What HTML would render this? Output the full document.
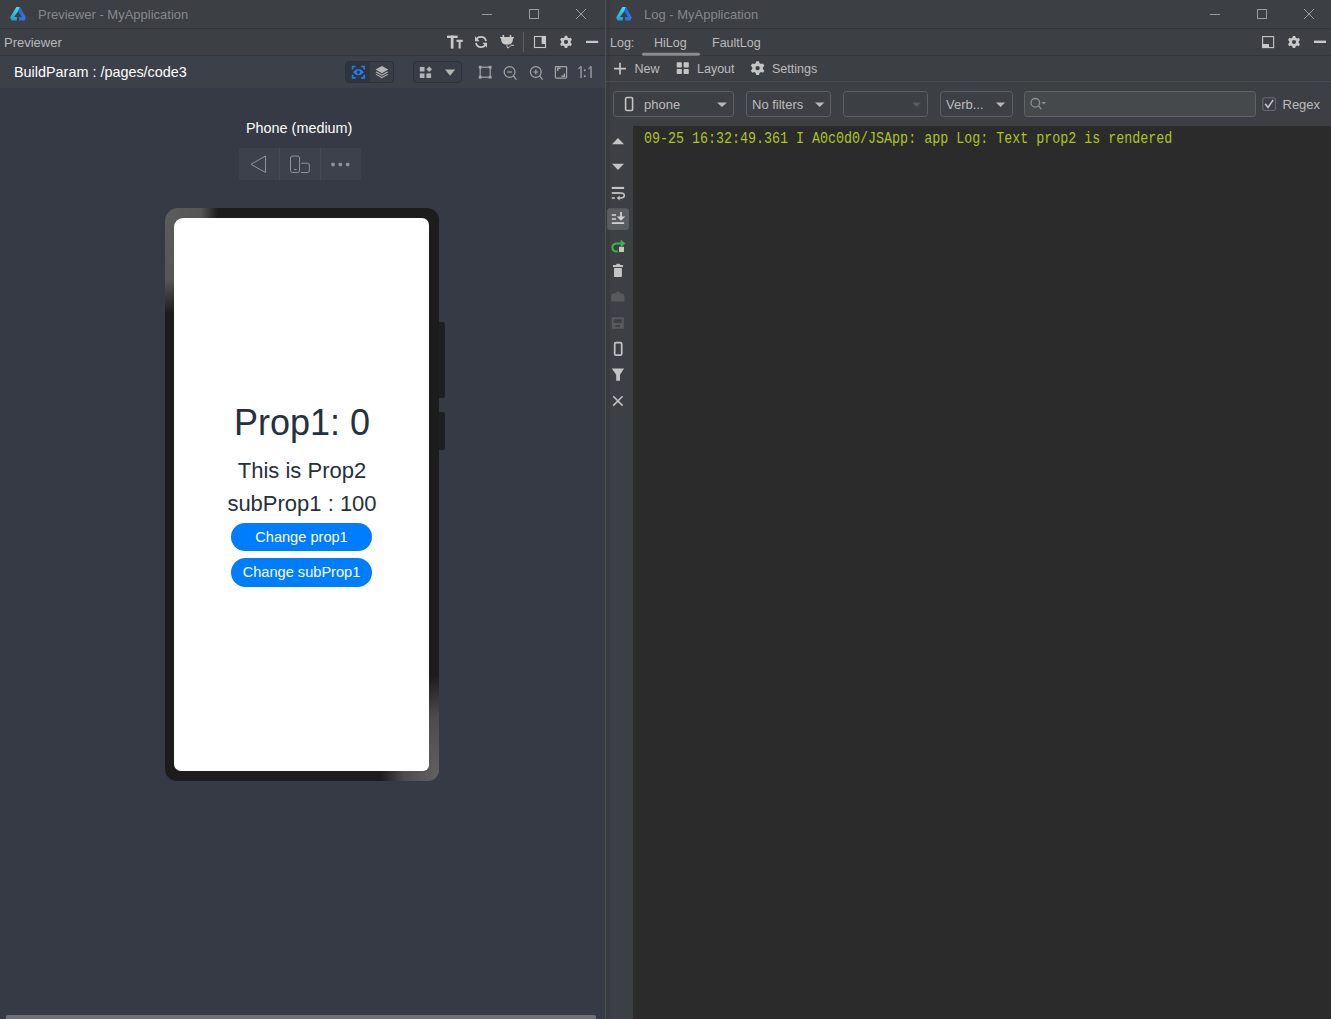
<!DOCTYPE html>
<html><head><meta charset="utf-8">
<style>
*{margin:0;padding:0;box-sizing:border-box}
html,body{width:1331px;height:1019px;overflow:hidden;background:#3c3f44;font-family:"Liberation Sans",sans-serif}
.a{position:absolute}
svg{position:absolute;overflow:visible}
.tt{font-size:13px;color:#86888b;top:7px;white-space:nowrap}
.nw{white-space:nowrap}
</style></head><body>
<!-- LEFT WINDOW -->
<div class="a" style="left:0;top:0;width:605px;height:1019px;background:#353a44">
  <div class="a" style="left:0;top:0;width:605px;height:28px;background:#3c3f44"></div>
  <div class="a" style="left:0;top:28px;width:605px;height:1px;background:#323539"></div>
  <!-- logo -->
  <svg style="left:10px;top:6.9px" width="16" height="14" viewBox="0 0 16 14">
    <defs><linearGradient id="lgc" x1="0" y1="0" x2="0" y2="1"><stop offset="0" stop-color="#46dde9"/><stop offset="1" stop-color="#1d9cd6"/></linearGradient>
    <linearGradient id="lgb" x1="0" y1="0" x2="1" y2="1"><stop offset="0" stop-color="#2467d4"/><stop offset="1" stop-color="#3d74e2"/></linearGradient></defs>
    <path d="M6.3 0 H10 L8.2 4.3 L4 10.1 H6.9 V13.4 H1.5 L0.1 10.5 Z" fill="url(#lgc)"/>
    <path d="M10 0 L15.8 10.5 L14.5 13.4 H9 V10.1 H12 L8.2 4.3 Z" fill="url(#lgb)"/>
  </svg>
  <div class="a tt" style="left:38px">Previewer - MyApplication</div>
  <!-- window buttons -->
  <div class="a" style="left:482px;top:14px;width:10px;height:1px;background:#9a9c9e"></div>
  <div class="a" style="left:529px;top:9px;width:10px;height:10px;border:1px solid #9a9c9e"></div>
  <svg style="left:576px;top:9px" width="10" height="10" viewBox="0 0 10 10"><path d="M0 0L10 10M10 0L0 10" stroke="#9a9c9e" stroke-width="1"/></svg>

  <div class="a" style="left:0;top:29px;width:605px;height:26px;background:#3c3f44"></div>
  <div class="a" style="left:0;top:55px;width:605px;height:1px;background:#323539"></div>
  <div class="a nw" style="left:4px;top:35px;font-size:13px;color:#b8babc">Previewer</div>
  <svg style="left:0;top:0" width="1" height="1">
    <g fill="#c8c8c8">
      <rect x="447" y="35.6" width="10.7" height="2.4"/><rect x="450.8" y="35.6" width="2.7" height="13"/>
      <rect x="456.5" y="39.8" width="6.3" height="2.1"/><rect x="458.6" y="39.8" width="2.1" height="8.7"/>
    </g>
    <g fill="none" stroke="#c8c8c8" stroke-width="1.8">
      <path d="M476 41 A5.1 5.1 0 0 1 486 41"/>
      <path d="M486 43 A5.1 5.1 0 0 1 476 43"/>
    </g>
    <path d="M475 36.2 V41.2 H479.6 Z" fill="#c8c8c8"/>
    <path d="M487 47.8 V42.8 H482.4 Z" fill="#c8c8c8"/>
    <g fill="#c8c8c8">
      <rect x="502.5" y="35" width="1.6" height="3"/><rect x="509.7" y="35" width="1.6" height="3"/>
      <path d="M500 37 H514 V38.2 H513 Q513 44.6 507.6 44.6 H506.2 Q501 44.6 501 38.2 H500 Z"/>
    </g>
    <path d="M507 44.5 V46.5 Q507.3 49 509 47.5 L511 45.3 H514" fill="none" stroke="#c8c8c8" stroke-width="1"/>
    <rect x="523" y="32" width="1" height="20" fill="#5c5e5f"/>
    <rect x="534.5" y="36.5" width="11" height="11" fill="none" stroke="#c8c8c8" stroke-width="1.1"/>
    <path d="M541.6 36 H546 V44 H541.6 Z" fill="#c8c8c8"/>
    <g transform="translate(566,41.9) scale(0.9)">
      <path fill="#c8c8c8" fill-rule="evenodd" d="M-1.3 -6.8 H1.3 L1.8 -4.9 L3.4 -4 L5.3 -4.6 L6.6 -2.3 L5.2 -0.9 V0.9 L6.6 2.3 L5.3 4.6 L3.4 4 L1.8 4.9 L1.3 6.8 H-1.3 L-1.8 4.9 L-3.4 4 L-5.3 4.6 L-6.6 2.3 L-5.2 0.9 V-0.9 L-6.6 -2.3 L-5.3 -4.6 L-3.4 -4 L-1.8 -4.9 Z M0 -2.3 A2.3 2.3 0 1 0 0 2.3 A2.3 2.3 0 1 0 0 -2.3 Z"/>
    </g>
    <rect x="586" y="40.8" width="12.2" height="2.2" fill="#c8c8c8"/>
  </svg>

  <div class="a" style="left:0;top:56px;width:605px;height:32px;background:#3c4049"></div>
  <div class="a nw" style="left:14px;top:64px;font-size:14.4px;color:#ffffff">BuildParam : /pages/code3</div>
  <div class="a" style="left:345px;top:61px;width:49px;height:22px;border-radius:4px;background:#393d45;border:1px solid #2d3036"></div>
  <div class="a" style="left:346px;top:62px;width:24px;height:20px;border-radius:3px 0 0 3px;background:#30343b"></div>
  <div class="a" style="left:413px;top:61px;width:49px;height:22px;border-radius:4px;background:#393d45;border:1px solid #2d3036"></div>
  <svg style="left:0;top:0" width="1" height="1">
    <g fill="none" stroke="#1a7ff0" stroke-width="1.7">
      <path d="M352.6 69.6 V66.5 H355.7 M361.1 66.5 H364.2 V69.6 M364.2 74.8 V77.9 H361.1 M355.7 77.9 H352.6 V74.8"/>
    </g>
    <path d="M352.9 72.2 Q358.4 65.9 363.9 72.2 Q358.4 78.5 352.9 72.2 Z" fill="#1a7ff0"/>
    <circle cx="358.4" cy="72.2" r="1.6" fill="#30343b"/>
    <g fill="#b4b4b4">
      <path d="M381.9 66 L388.3 69.6 L381.9 73.2 L375.5 69.6 Z"/>
      <path d="M375.5 72.2 L376.6 71.6 L381.9 74.6 L387.2 71.6 L388.3 72.2 L381.9 75.8 Z"/>
      <path d="M375.5 74.6 L376.6 74 L381.9 77 L387.2 74 L388.3 74.6 L381.9 78.2 Z"/>
    </g>
    <g fill="#b4b4b4">
      <rect x="419.8" y="66.9" width="4.7" height="4.6"/>
      <path d="M429.2 66.4 L432 69.2 L429.2 72 L426.4 69.2 Z"/>
      <rect x="419.8" y="73.4" width="4.7" height="4.6"/>
      <rect x="426.4" y="73.4" width="4.7" height="4.6"/>
      <path d="M445 69.6 H455.2 L450.1 75.7 Z"/>
    </g>
    <g fill="none" stroke="#a4a4a4" stroke-width="1.2">
      <rect x="480.2" y="67.2" width="10" height="10"/>
      <circle cx="509.6" cy="72" r="5.4"/>
      <path d="M513.4 75.8 L516.4 79.6"/>
      <path d="M507.2 72 H512"/>
      <circle cx="535.8" cy="72" r="5.4"/>
      <path d="M539.6 75.8 L542.6 79.6"/>
      <path d="M533.4 72 H538.2 M535.8 69.6 V74.4"/>
      <rect x="555.4" y="66.7" width="11.2" height="11.4" rx="0.8"/>
      <path d="M557.7 71 V68.3 H560.6 M564.4 73.4 V76.3 H561.4" stroke-width="1.4"/>
    </g>
    <g fill="#a4a4a4">
      <rect x="478.8" y="65.8" width="2.8" height="2.8"/><rect x="488.8" y="65.8" width="2.8" height="2.8"/>
      <rect x="478.8" y="75.8" width="2.8" height="2.8"/><rect x="488.8" y="75.8" width="2.8" height="2.8"/>
    </g>
  </svg>
  <svg style="left:0;top:0" width="1" height="1"><g fill="#a4a4a4">
    <rect x="580.4" y="66.2" width="1.3" height="11.8"/><path d="M578.2 68.6 L580.2 66.2 H581.2 L578.8 69.4 Z"/>
    <rect x="583.9" y="69.4" width="1.7" height="1.7"/><rect x="583.9" y="75.4" width="1.7" height="1.7"/>
    <rect x="590.4" y="66.2" width="1.3" height="11.8"/><path d="M588.2 68.6 L590.2 66.2 H591.2 L588.8 69.4 Z"/>
  </g></svg>

  <div class="a nw" style="left:246px;top:120px;font-size:14.4px;color:#ffffff">Phone (medium)</div>
  <!-- control group -->
  <div class="a" style="left:239px;top:148px;width:122px;height:32px;background:#3c414b"></div>
  <div class="a" style="left:279px;top:148px;width:1px;height:32px;background:#464a55"></div>
  <div class="a" style="left:320px;top:148px;width:1px;height:32px;background:#464a55"></div>
  <svg style="left:0;top:0" width="1" height="1">
    <path d="M251 164.3 L265.5 156 L265.5 172.5 Z" fill="none" stroke="#8f9399" stroke-width="1" stroke-linejoin="round"/>
    <rect x="290.5" y="156" width="9" height="16.5" rx="2" fill="none" stroke="#8f9399" stroke-width="1"/>
    <path d="M294 169.5 H296.5" stroke="#8f9399" stroke-width="1"/>
    <path d="M301 163.2 H307.5 Q309.3 163.2 309.3 165 V170.7 Q309.3 172.5 307.5 172.5 H301" fill="none" stroke="#8f9399" stroke-width="1"/>
    <circle cx="333" cy="164.5" r="1.9" fill="#8f9399"/>
    <circle cx="340.3" cy="164.5" r="1.9" fill="#8f9399"/>
    <circle cx="347.7" cy="164.5" r="1.9" fill="#8f9399"/>
  </svg>

  <!-- phone -->
  <div class="a" style="left:165px;top:208px;width:274px;height:573px;border-radius:13px 12px 11px 12px;background:radial-gradient(ellipse 53px 106px at 0 0,#5c5c5c 0%,#565656 68%,rgba(28,28,29,0) 100%),radial-gradient(ellipse 58px 106px at 100% 100%,#626262 0%,#4c4c4c 60%,rgba(28,28,29,0) 100%),#1c1c1d"></div>
  <div class="a" style="left:174px;top:218px;width:255px;height:553px;border-radius:9px 7px 6px 7px;background:#ffffff"></div>
  <div class="a" style="left:439px;top:322px;width:5.5px;height:76px;border-radius:0 2.5px 2.5px 0;background:#1e1f21"></div>
  <div class="a" style="left:439px;top:412px;width:5.5px;height:38px;border-radius:0 2.5px 2.5px 0;background:#1e1f21"></div>

  <div class="a nw" style="left:174px;top:405px;width:256px;text-align:center;font-size:36px;line-height:1;color:#253040">Prop1: 0</div>
  <div class="a nw" style="left:174px;top:459.5px;width:256px;text-align:center;font-size:22px;line-height:1;color:#253040">This is Prop2</div>
  <div class="a nw" style="left:174px;top:492.5px;width:256px;text-align:center;font-size:22px;line-height:1;color:#253040">subProp1 : 100</div>
  <div class="a nw" style="left:231px;top:523px;width:141px;height:28px;border-radius:14px;background:#007dff;color:#fff;font-size:14.6px;text-align:center;line-height:28px">Change prop1</div>
  <div class="a nw" style="left:231px;top:558px;width:141px;height:29px;border-radius:14.5px;background:#007dff;color:#fff;font-size:14.6px;text-align:center;line-height:29px">Change subProp1</div>

  <!-- bottom scrollbar -->
  <div class="a" style="left:6px;top:1015px;width:590px;height:4px;border-radius:2px 2px 0 0;background:#6e7175"></div>
</div>
<div class="a" style="left:605px;top:0;width:1px;height:1019px;background:#4e5155"></div>

<!-- RIGHT WINDOW -->
<div class="a" style="left:606px;top:0;width:725px;height:1019px;background:#3c3f44">
  <div class="a" style="left:0;top:0;width:4px;height:1019px;background:#393b3f"></div>
  <div class="a" style="left:0;top:28px;width:725px;height:1px;background:#323539"></div>
  <svg style="left:10px;top:6.9px" width="16" height="14" viewBox="0 0 16 14">
    <path d="M6.3 0 H10 L8.2 4.3 L4 10.1 H6.9 V13.4 H1.5 L0.1 10.5 Z" fill="url(#lgc)"/>
    <path d="M10 0 L15.8 10.5 L14.5 13.4 H9 V10.1 H12 L8.2 4.3 Z" fill="url(#lgb)"/>
  </svg>
  <div class="a tt" style="left:38px">Log - MyApplication</div>
  <div class="a" style="left:0;top:55px;width:725px;height:1px;background:#323539"></div>
  <div class="a" style="left:0;top:81px;width:725px;height:1px;background:#4a4c4e"></div>
  <div class="a" style="left:27px;top:126px;width:698px;height:893px;background:#2b2b2b"></div>
</div>
<svg style="left:0;top:0" width="1" height="1">
  <!-- window buttons -->
  <g stroke="#9a9c9e" stroke-width="1" fill="none">
    <path d="M1210 14.5 H1220"/>
    <rect x="1257.5" y="9.5" width="9" height="9"/>
    <path d="M1304 9 L1314 19 M1314 9 L1304 19"/>
  </g>
  <!-- row2 right icons -->
  <rect x="1262.6" y="36.6" width="11" height="11" fill="none" stroke="#c8c8c8" stroke-width="1.1"/>
  <path d="M1262 44 H1269 V48 H1262 Z" fill="#c8c8c8"/>
  <g transform="translate(1294,42) scale(0.9)">
    <path fill="#c8c8c8" fill-rule="evenodd" d="M-1.3 -6.8 H1.3 L1.8 -4.9 L3.4 -4 L5.3 -4.6 L6.6 -2.3 L5.2 -0.9 V0.9 L6.6 2.3 L5.3 4.6 L3.4 4 L1.8 4.9 L1.3 6.8 H-1.3 L-1.8 4.9 L-3.4 4 L-5.3 4.6 L-6.6 2.3 L-5.2 0.9 V-0.9 L-6.6 -2.3 L-5.3 -4.6 L-3.4 -4 L-1.8 -4.9 Z M0 -2.3 A2.3 2.3 0 1 0 0 2.3 A2.3 2.3 0 1 0 0 -2.3 Z"/>
  </g>
  <rect x="1314" y="40.6" width="12" height="2.4" fill="#c8c8c8"/>
  <!-- tab underline -->
  <rect x="642" y="52.8" width="58" height="3" rx="1.5" fill="#8a8c8f"/>
  <!-- New / Layout / Settings icons -->
  <path d="M620 62.7 V74.5 M614 68.6 H626" stroke="#c4c4c4" stroke-width="1.7"/>
  <g fill="#c4c4c4">
    <rect x="676.7" y="62.3" width="5.2" height="5.2" rx="0.8"/>
    <rect x="683.6" y="62.3" width="5.2" height="5.2" rx="0.8"/>
    <rect x="676.7" y="68.9" width="5.2" height="5.2" rx="0.8"/>
    <rect x="683.6" y="68.9" width="5.2" height="5.2" rx="0.8"/>
  </g>
  <g transform="translate(757.6,68.1)">
    <path fill="#c4c4c4" fill-rule="evenodd" d="M-1.4 -6.8 H1.4 L1.9 -4.9 L3.5 -4 L5.4 -4.6 L6.8 -2.3 L5.3 -0.9 V0.9 L6.8 2.3 L5.4 4.6 L3.5 4 L1.9 4.9 L1.4 6.8 H-1.4 L-1.9 4.9 L-3.5 4 L-5.4 4.6 L-6.8 2.3 L-5.3 0.9 V-0.9 L-6.8 -2.3 L-5.4 -4.6 L-3.5 -4 L-1.9 -4.9 Z M0 -2.2 A2.2 2.2 0 1 0 0 2.2 A2.2 2.2 0 1 0 0 -2.2 Z"/>
  </g>
  <!-- combo boxes -->
  <g fill="none" stroke="#5d6062" stroke-width="1">
    <rect x="613.5" y="91.5" width="120" height="25" rx="3"/>
    <rect x="746.5" y="91.5" width="84" height="25" rx="3"/>
    <rect x="843.5" y="91.5" width="84" height="25" rx="3"/>
    <rect x="940.5" y="91.5" width="72" height="25" rx="3"/>
  </g>
  <rect x="1024.5" y="91.5" width="231" height="25" rx="3" fill="#45494b" stroke="#5f6462" stroke-width="1"/>
  <rect x="625.6" y="97.5" width="7" height="13" rx="1.3" fill="none" stroke="#c4c4c4" stroke-width="1.6"/>
  <g fill="#b8b8b8">
    <path d="M717 102.5 H727 L722 107 Z"/>
    <path d="M815 102.5 H824.5 L819.7 107 Z"/>
    <path d="M996 102.5 H1005 L1000.5 107 Z"/>
  </g>
  <path d="M912 102.5 H921 L916.5 107 Z" fill="#5a5c5f"/>
  <g fill="none" stroke="#8c8f91" stroke-width="1.3">
    <circle cx="1035.3" cy="102.8" r="4.3"/>
    <path d="M1038.4 105.9 L1041.3 109"/>
  </g>
  <path d="M1041.5 102 H1046 L1043.75 104.5 Z" fill="#8c8f91"/>
  <!-- checkbox -->
  <rect x="1262.8" y="97.8" width="12.6" height="12.6" rx="1.5" fill="#3c3f44" stroke="#6b6e70" stroke-width="1"/>
  <path d="M1265.2 103.8 L1268 107.4 L1273.2 99.8" fill="none" stroke="#c8c8c8" stroke-width="1.5"/>
  <!-- left column icons -->
  <path d="M618 138 L624 144.2 H612 Z" fill="#c4c4c4"/>
  <path d="M612 163.7 H624 L618 169.9 Z" fill="#c4c4c4"/>
  <g fill="#c4c4c4">
    <rect x="611.8" y="186.9" width="12.3" height="2.1"/>
    <rect x="611.8" y="192.1" width="9" height="1.8"/>
    <rect x="611.8" y="197.2" width="3" height="1.6"/>
  </g>
  <path d="M620.5 193 Q624.3 193 624.3 195.5 Q624.3 198 620.5 198 H618.8" fill="none" stroke="#c4c4c4" stroke-width="1.6"/>
  <path d="M616.8 198 L619.6 195.4 V200.6 Z" fill="#c4c4c4"/>
  <rect x="607.1" y="208.2" width="21.9" height="21.7" rx="3" fill="#5a5d60"/>
  <g fill="#cfcfcf">
    <rect x="611.8" y="214.2" width="4.2" height="1.6"/>
    <rect x="611.8" y="218.2" width="4.2" height="1.6"/>
    <rect x="611.8" y="222.2" width="12.3" height="1.8"/>
    <rect x="620.1" y="212" width="1.8" height="6"/>
    <path d="M616.8 216.5 H625.2 L621 220.8 Z"/>
  </g>
  <path d="M617.8 251.6 Q612.4 251.6 612.4 247.2 Q612.4 243.6 617.5 243.6 H621" fill="none" stroke="#3fb24a" stroke-width="2"/>
  <path d="M620.6 239.6 L625.4 243.6 L620.6 247.6 Z" fill="#3fb24a"/>
  <rect x="619" y="246.8" width="5" height="5.2" fill="#c4c4c4"/>
  <g fill="#c4c4c4">
    <rect x="613" y="265" width="10" height="2.1"/>
    <rect x="616.3" y="263.8" width="3.7" height="1.5"/>
    <rect x="614" y="268" width="7.9" height="8.9" rx="0.6"/>
  </g>
  <path d="M611.2 301.5 V296 Q611.2 293.5 613.5 293.5 H615.5 L617 291.5 H619 L620.5 293.5 H622.3 Q624.5 293.5 624.5 296 V301.5 Z" fill="#57595c"/>
  <path d="M611.8 317.2 H623.8 V328.8 H611.8 Z M613.8 319.2 V323 H621.8 V319.2 Z M615.5 325 V327 H620 V325 Z" fill="#57595c" fill-rule="evenodd"/>
  <rect x="614.7" y="342.7" width="7" height="12.5" rx="1.3" fill="none" stroke="#c4c4c4" stroke-width="1.7"/>
  <path d="M611.8 368.5 H624 L620 374.8 V380.7 H616.2 V374.8 Z" fill="#c4c4c4"/>
  <path d="M613.2 396.2 L622.6 405.6 M622.6 396.2 L613.2 405.6" stroke="#c4c4c4" stroke-width="1.5"/>
</svg>
<div class="a nw" style="left:610px;top:36px;font-size:12.5px;color:#bcbcbc">Log:</div>
<div class="a nw" style="left:654px;top:36px;font-size:12.5px;color:#bcbcbc">HiLog</div>
<div class="a nw" style="left:712px;top:36px;font-size:12.5px;color:#bcbcbc">FaultLog</div>
<div class="a nw" style="left:634.5px;top:62px;font-size:12.5px;color:#bcbcbc">New</div>
<div class="a nw" style="left:697px;top:62px;font-size:12.5px;color:#bcbcbc">Layout</div>
<div class="a nw" style="left:772px;top:62px;font-size:12.5px;color:#bcbcbc">Settings</div>
<div class="a nw" style="left:644px;top:97px;font-size:13px;color:#bcbcbc">phone</div>
<div class="a nw" style="left:752px;top:97px;font-size:13px;color:#bcbcbc">No filters</div>
<div class="a nw" style="left:946px;top:97px;font-size:13px;color:#bcbcbc">Verb...</div>
<div class="a nw" style="left:1282.5px;top:97px;font-size:13px;color:#bcbcbc">Regex</div>
<div class="a nw" style="left:644px;top:130px;font-family:'Liberation Mono',monospace;font-size:16px;color:#aec41f;transform:scaleX(0.8336);transform-origin:0 0">09-25 16:32:49.361 I A0c0d0/JSApp: app Log: Text prop2 is rendered</div>
</body></html>
